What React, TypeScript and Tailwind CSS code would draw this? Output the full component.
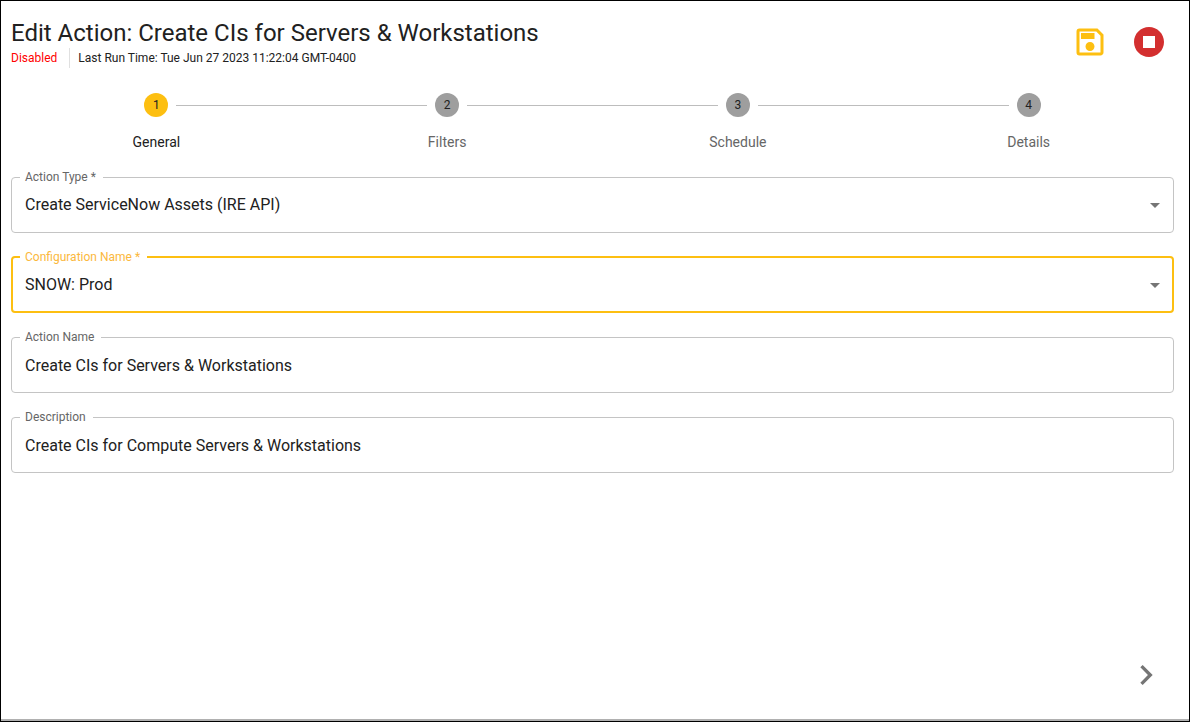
import { useState, type ReactNode } from 'react'
import clsx from 'clsx'
import { MdArrowDropDown, MdChevronRight, MdOutlineSave, MdStopCircle } from 'react-icons/md'

const steps = ['General', 'Filters', 'Schedule', 'Details']

interface OutlinedFieldProps {
  id: string
  label: string
  active?: boolean
  select?: boolean
  children: ReactNode
}

const OutlinedField = ({ id, label, active = false, select = false, children }: OutlinedFieldProps) => (
  <fieldset
    className={clsx(
      'relative min-w-0 rounded',
      active ? 'h-[62px] border-2 border-[#fdbf11] pl-[7px]' : 'h-[62px] border border-[#c4c4c4] pl-2',
    )}
  >
    <legend className={clsx('pl-[5px] pr-[7px] text-xs leading-3', active ? 'text-[#fbb83c]' : 'text-[#666666]')}>
      <label htmlFor={id}>{label}</label>
    </legend>
    {children}
    {select && (
      <MdArrowDropDown
        className={clsx(
          'pointer-events-none absolute top-2.5 size-6 text-[#757575]',
          active ? 'right-[5px]' : 'right-1.5',
        )}
      />
    )}
  </fieldset>
)

const controlClass =
  'block h-12 w-full appearance-none bg-transparent pb-1 pl-[5px] text-base text-[#212121] outline-none'

const App = () => {
  const [activeStep, setActiveStep] = useState(0)
  const [actionType, setActionType] = useState('ire')
  const [configuration, setConfiguration] = useState('prod')
  const [actionName, setActionName] = useState('Create CIs for Servers & Workstations')
  const [description, setDescription] = useState('Create CIs for Compute Servers & Workstations')

  return (
    <div className="flex min-h-screen flex-col border border-black bg-white font-[Roboto,sans-serif] text-[#212121]">
      <main className="flex flex-1 flex-col border-b-2 border-[#b0b0b0] pl-2.5 pr-[15px] pt-[17px]">
        <header className="flex items-start justify-between">
          <div>
            <h1 className="text-2xl leading-[30px]">Edit Action: Create CIs for Servers &amp; Workstations</h1>
            <div className="flex items-center text-xs leading-5">
              <span className="border-r border-[#e0e0e0] pr-3 text-[#ff0000]">Disabled</span>
              <span className="pl-2">Last Run Time: Tue Jun 27 2023 11:22:04 GMT-0400</span>
            </div>
          </div>
          <div className="flex gap-[23px] pr-[7px] pt-1.5">
            <button type="button" aria-label="Save" className="text-[#fdbf11]">
              <MdOutlineSave className="size-9" />
            </button>
            <button type="button" aria-label="Stop" className="text-[#d32f2f]">
              <MdStopCircle className="size-9" />
            </button>
          </div>
        </header>

        {/* Stepper */}
        <ol className="mt-[25px] flex">
          {steps.map((step, index) => (
            <li key={step} className="flex flex-1 flex-col items-center gap-[15px]">
              <div className="flex w-full items-center gap-2">
                <span className={clsx('h-px flex-1', index > 0 && 'bg-[#bdbdbd]')} />
                <span
                  className={clsx(
                    'flex size-6 items-center justify-center rounded-full text-xs',
                    index === activeStep ? 'bg-[#fdbf11]' : 'bg-[#9e9e9e]',
                  )}
                >
                  {index + 1}
                </span>
                <span className={clsx('h-px flex-1', index < steps.length - 1 && 'bg-[#bdbdbd]')} />
              </div>
              <span className={clsx('text-sm leading-5', index !== activeStep && 'text-[#666666]')}>{step}</span>
            </li>
          ))}
        </ol>

        <form className="mt-[19px] flex flex-col gap-[18px]">
          <OutlinedField id="action-type" label="Action Type *" select>
            <select
              id="action-type"
              className={controlClass}
              value={actionType}
              onChange={(e) => setActionType(e.target.value)}
            >
              <option value="ire">Create ServiceNow Assets (IRE API)</option>
            </select>
          </OutlinedField>
          <OutlinedField id="configuration" label="Configuration Name *" active select>
            <select
              id="configuration"
              className={controlClass}
              value={configuration}
              onChange={(e) => setConfiguration(e.target.value)}
            >
              <option value="prod">SNOW: Prod</option>
            </select>
          </OutlinedField>
          <OutlinedField id="action-name" label="Action Name">
            <input
              id="action-name"
              type="text"
              className={controlClass}
              value={actionName}
              onChange={(e) => setActionName(e.target.value)}
            />
          </OutlinedField>
          <OutlinedField id="description" label="Description">
            <input
              id="description"
              type="text"
              className={controlClass}
              value={description}
              onChange={(e) => setDescription(e.target.value)}
            />
          </OutlinedField>
        </form>

        <footer className="mt-auto flex justify-end pb-6 pr-2">
          <button
            type="button"
            aria-label="Next step"
            className="text-[#757575]"
            onClick={() => setActiveStep(Math.min(activeStep + 1, steps.length - 1))}
          >
            <MdChevronRight className="size-10" />
          </button>
        </footer>
      </main>
    </div>
  )
}

export default App
